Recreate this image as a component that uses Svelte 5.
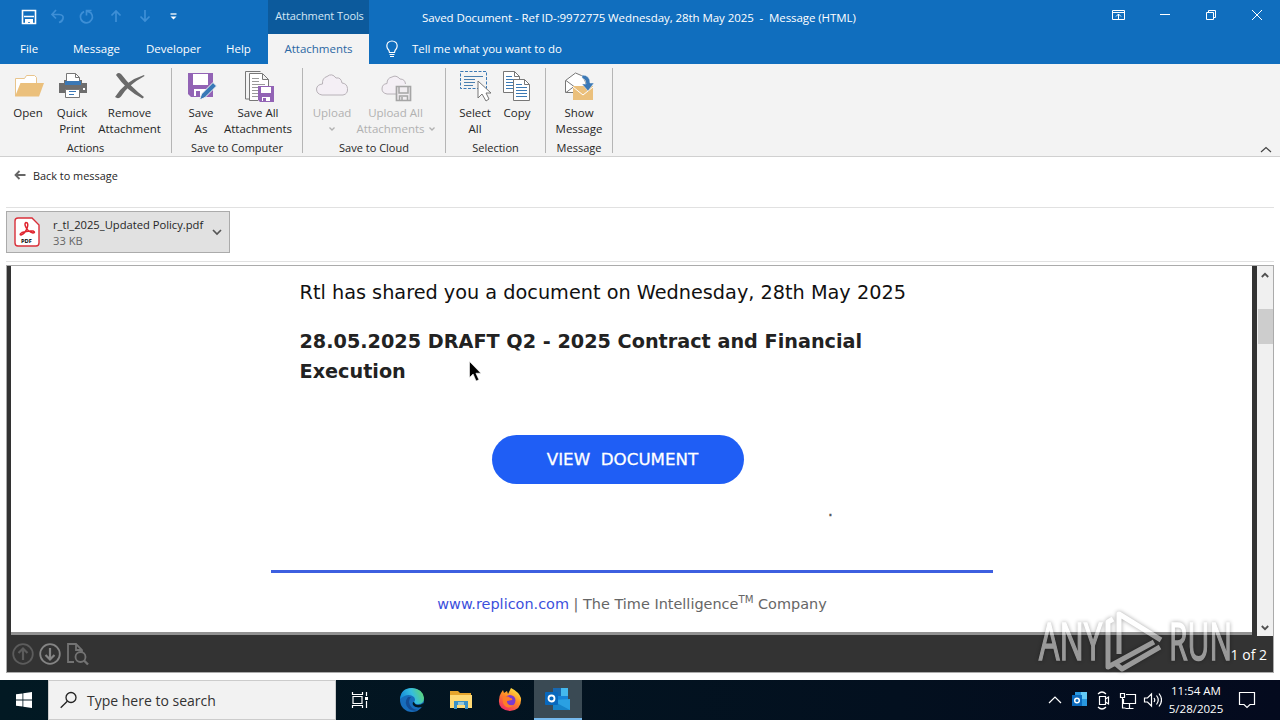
<script lang="ts">
	type Action = { icon: string; lines: string[]; width: number; arrow?: boolean };
	type Group = { name: string; width: number; pad: number; disabled?: boolean; actions: Action[] };

	const groups: Group[] = [
		{
			name: 'Actions',
			width: 172,
			pad: 6,
			actions: [
				{ icon: 'open', lines: ['Open'], width: 44 },
				{ icon: 'print', lines: ['Quick', 'Print'], width: 44 },
				{ icon: 'remove', lines: ['Remove', 'Attachment'], width: 71 }
			]
		},
		{
			name: 'Save to Computer',
			width: 131,
			pad: 8,
			actions: [
				{ icon: 'save', lines: ['Save', 'As'], width: 42 },
				{ icon: 'saveall', lines: ['Save All', 'Attachments'], width: 72 }
			]
		},
		{
			name: 'Save to Cloud',
			width: 143,
			pad: 9,
			disabled: true,
			actions: [
				{ icon: 'cloud', lines: ['Upload', ''], width: 40, arrow: true },
				{ icon: 'cloudall', lines: ['Upload All', 'Attachments'], width: 87, arrow: true }
			]
		},
		{
			name: 'Selection',
			width: 100,
			pad: 8,
			actions: [
				{ icon: 'select', lines: ['Select', 'All'], width: 42 },
				{ icon: 'copy', lines: ['Copy'], width: 42 }
			]
		},
		{
			name: 'Message',
			width: 67,
			pad: 4,
			actions: [{ icon: 'show', lines: ['Show', 'Message'], width: 58 }]
		}
	];
</script>

{#snippet chevron(color: string)}
	<svg width="6" height="4" viewBox="0 0 6 4"><path d="M.5 .5 3 3 5.5 .5" fill="none" stroke={color} stroke-width="1.300" /></svg>
{/snippet}

{#snippet ribbonIcon(name: string)}
	<svg width="34" height="34" viewBox="0 0 34 34" fill="none">
		{#if name === 'open'}
			<path d="M4.500 27V9.500h9l2-3h8l2 2v6" fill="#fff" stroke="#e8c48c" />
			<path d="M4 27.500 9.500 14H33l-5 13.500z" fill="#ebc07c" />
		{:else if name === 'print'}
			<path d="M4 14h5v-3h18v3h5v10H4z" fill="#6d6d6d" />
			<path d="M11.500 13V4.500h9l4 4V13" fill="#fff" stroke="#777" />
			<path d="M20.500 4.500v4h4" stroke="#777" />
			<path d="M10 12h16v4H10z" fill="#3b78b5" />
			<path d="M10.500 20.500h14v8h-14z" fill="#fff" stroke="#777" />
			<path d="M14 22.500h7M14 25.500h5" stroke="#3b78b5" />
			<path d="M28 20h2" stroke="#fff" stroke-width="2" />
		{:else if name === 'remove'}
			<path d="M3 6q2-3.500 5.500-.5Q18 18 31 28l-1.500 1.500Q14 22 3 6z" fill="#6a6a6a" />
			<path d="m31 6 .5 1Q15 16 8 27.500q-2.500 3-6 .5Q12 12 31 6z" fill="#6a6a6a" />
		{:else if name === 'save'}
			<path d="M4 4h25v24H7l-3-3z" fill="#9263b5" />
			<path d="M9 5h15v11H9z" fill="#fff" />
			<path d="M10 20h13v7H10z" fill="#fff" />
			<path d="M12 22h4v5h-4z" fill="#9263b5" />
			<path d="m15.500 31 2-6L29 13.500l3.500 3.500L21 28.500z" fill="#3779b7" stroke="#f3f3f3" />
		{:else if name === 'saveall'}
			<path d="M8 30H4.500V2.500h15" stroke="#777" />
			<path d="M17 31.500H8.500V4.500h13l6 6V18M21.500 5v5.500h6" fill="#fff" stroke="#777" />
			<path d="M11 9.500h7M11 12.500h7M11 15.500h13M11 18.500h6M11 21.500h6M11 24.500h6M11 27.500h6" stroke="#999" />
			<path d="M17 17h16v16H19l-2-2z" fill="#9263b5" />
			<path d="M20 18h10v6H20zM21 28h8v4h-8z" fill="#fff" />
			<path d="M22 29h3v3h-3z" fill="#9263b5" />
		{:else if name === 'cloud'}
			<path d="M7 26Q1.500 25 1.500 20q.5-4.500 6-5Q7 9 12 7.500q5-4 9 1.500 5-1 6 5 5 .5 5.500 5.500Q33 25 28 26z" fill="#f4eff5" stroke="#b8b2b8" />
		{:else if name === 'cloudall'}
			<path d="M17 25H8q-5-1-5-5 0-5 5-5.500Q8 9 13 8q4-2.500 8 2 5 0 5.500 5" fill="#f4eff5" stroke="#b8b2b8" />
			<path d="M17.500 17.500h14v14h-14z" fill="#f1edf1" stroke="#a5a5a5" stroke-width="1.700" />
			<path d="M20 18v6h9v-6M20.500 31v-4h8v4M23 28v3" stroke="#a5a5a5" stroke-width="1.500" />
		{:else if name === 'select'}
			<path d="M2.500 2.500h26v17h-26z" stroke="#3b79b4" stroke-dasharray="3 1.500" />
			<path d="M6 7.500h19M6 10.500h11M6 13.500h11M6 16.500h9" stroke="#4a7faf" />
			<path d="M20 12v17l4-4 4 7 3-2-3-6h5z" fill="#fff" stroke="#777" />
		{:else if name === 'copy'}
			<path d="M3.500 2.500h11l5 5v16h-16z" fill="#fff" stroke="#777" />
			<path d="M14.500 2.500v5h5" stroke="#777" />
			<path d="M6 7.500h6M6 10.500h9M6 13.500h9M6 16.500h7M6 19.500h7" stroke="#3b79b4" />
			<path d="M13.500 10.500h11l5 5v16h-16z" fill="#fff" stroke="#777" />
			<path d="M24.500 10.500v5h5" stroke="#777" />
			<path d="M16 15.500h6M16 18.500h11M16 21.500h11M16 24.500h11M16 27.500h11" stroke="#3b79b4" />
		{:else if name === 'show'}
			<path d="M3.500 23.500v-12l10-7.500 7 3 3 6v10.500z" fill="#fff" stroke="#777" />
			<path d="m4 11.500 8 6-8 6" stroke="#777" />
			<path d="M11 17h20v14H11z" fill="#ebc07c" />
			<path d="m11 18 10 8 10-8" stroke="#fff" />
			<path d="M20 6q8 0 8 8h4l-6 8-6-7h4q0-5-4-6z" fill="#3b78b5" stroke="#f3f3f3" stroke-width=".5" />
		{/if}
	</svg>
{/snippet}

<div class="desktop">
	<header>
		<div class="left">
			<div class="quick">
				<svg width="200" height="34" viewBox="0 0 200 34" fill="none">
					<path d="M22.500 10.500h13v13h-13z" stroke="#fff" stroke-width="1.600" />
					<path d="M24 16.500h10" stroke="#fff" stroke-width="1.500" />
					<path d="M25 19h8v5h-3v-2h-2v2h-3z" fill="#fff" />
					<g stroke="#3e8fd6" stroke-width="1.700">
						<path d="m56 10-4 4.500 4 4M52 14.500h7q5 .5 4 4-.5 3-4 4" />
						<path d="M84 11.500q-5 3-3 8 3 5 8.500 2.500 5-4 1.500-9l-4-2M86.500 15.500v-5h5" />
						<path d="M116 22V11M111.500 15.500 116 11l4.500 4.500" />
						<path d="M145 10v11M140.500 16.500 145 21l4.500-4.500" />
					</g>
					<path d="M170.500 14h6" stroke="#fff" stroke-width="1.300" />
					<path d="M170.500 16.500h6l-3 3z" fill="#fff" />
				</svg>
			</div>
			<nav class="tabs">
				<span class="file">File</span>
				<span class="msg">Message</span>
				<span class="dev">Developer</span>
				<span class="help">Help</span>
			</nav>
		</div>
		<div class="context">
			<div class="tools">Attachment Tools</div>
			<div class="active">Attachments</div>
		</div>
		<div class="right">
			<div class="titlebar">
				<span class="title">Saved Document - Ref ID-:9972775 Wednesday, 28th May 2025&nbsp; -&nbsp; Message (HTML)</span>
				<svg width="170" height="30" viewBox="0 0 170 30" fill="none" stroke="#fff">
					<path d="M2.500 10.500h12v9h-12zM3 12.500h11M8.500 19v-5M6 16.500 8.500 14l2.500 2.500" />
					<path d="M50 14.500h10M96.500 12.500h7v7h-7zM98.500 12v-1.500h7v7H104M142 10l10 10M152 10l-10 10" />
				</svg>
			</div>
			<div class="tell">
				<svg width="14" height="18" viewBox="0 0 14 18" fill="none" stroke="#fff" stroke-width="1.200">
					<path d="M4.500 12.500q0-2-2-4Q1 5 3 2.500 7-.5 11 2.500 13 5 11.500 8.500q-2 2-2 4zM4.500 14.500h5M5 16.500h4" />
				</svg>
				<span>Tell me what you want to do</span>
			</div>
		</div>
	</header>

	<section class="ribbon">
		{#each groups as group}
			<div class="group" style="width: {group.width}px">
				<div class="actions" class:disabled={group.disabled} style="padding-left: {group.pad}px">
					{#each group.actions as action}
						<div class="action" style="width: {action.width}px">
							{@render ribbonIcon(action.icon)}
							{#each action.lines as line, i}
								<span>
									{line}
									{#if action.arrow && i === 1}{@render chevron('#b1b1b1')}{/if}
								</span>
							{/each}
						</div>
					{/each}
				</div>
				<div class="group-name">{group.name}</div>
			</div>
		{/each}
		<svg class="collapse" width="12" height="7" viewBox="0 0 12 7"><path d="m1 6 5-4.500L11 6" fill="none" stroke="#444" stroke-width="1.200" /></svg>
	</section>

	<div class="back">
		<svg width="12" height="10" viewBox="0 0 12 10"><path d="M11.500 5H1.500M5.500 1 1.500 5l4 4" fill="none" stroke="#666" stroke-width="1.800" /></svg>
		<span>Back to message</span>
	</div>

	<div class="files">
		<div class="chip">
			<svg width="26" height="30" viewBox="0 0 26 30">
				<path d="M4 1h14l7 7v18q0 3-3 3H4q-3 0-3-3V4q0-3 3-3z" fill="#fff" stroke="#d9303a" stroke-width="1.400" />
				<path d="M12 5.500q3 0 1 6-2 5-6 6.500-2-.5 1-2.500 5-2 11-1.500 3 1.500 0 2-5-1.500-7-5.500-2-4 0-5z" fill="none" stroke="#e0242e" stroke-width="1.500" />
				<text x="7" y="25.500" textLength="11" lengthAdjust="spacingAndGlyphs">PDF</text>
			</svg>
			<div class="file-text">
				<span>r_tl_2025_Updated Policy.pdf</span>
				<span class="size">33 KB</span>
			</div>
			<svg width="10" height="7" viewBox="0 0 10 7"><path d="m1 1 4 4 4-4" fill="none" stroke="#555" stroke-width="1.700" /></svg>
		</div>
	</div>

	<main class="preview">
		<div class="view">
			<article>
				<p class="shared">Rtl has shared you a document on Wednesday, 28th May 2025</p>
				<h1>28.05.2025 DRAFT Q2 - 2025 Contract and Financial<br />Execution</h1>
				<div class="cta">VIEW&nbsp; DOCUMENT</div>
				<div class="dot">.</div>
				<footer>
					<span class="link">www.replicon.com</span> | The Time Intelligence<sup>TM</sup> Company
				</footer>
			</article>
			<div class="scrollbar">
				<svg width="8" height="6" viewBox="0 0 8 6"><path d="m.8 5 3.200-3.200L7.200 5" fill="none" stroke="#505050" stroke-width="1.800" /></svg>
				<div class="thumb"></div>
				<svg width="8" height="6" viewBox="0 0 8 6"><path d="m.8 1 3.200 3.200L7.200 1" fill="none" stroke="#505050" stroke-width="1.800" /></svg>
			</div>
		</div>
		<div class="pager">
			<svg width="84" height="26" viewBox="0 0 84 26" fill="none" stroke-width="1.800">
				<g stroke="#5c5c5c"><circle cx="16" cy="13" r="9.800" /><path d="M16 19V8M11.500 12 16 7.500l4.500 4.500" stroke-width="2.200" /></g>
				<g stroke="#858585"><circle cx="43" cy="13" r="9.800" /><path d="M43 7v11M38.500 14l4.500 4.500 4.500-4.500" stroke-width="2.200" /></g>
				<path d="M67 21h-6V3h8l6 6v2M69 3v6h6" stroke="#737373" />
				<circle cx="73.500" cy="16" r="5" stroke="#737373" /><path d="m77 19.500 4 4" stroke="#737373" stroke-width="2.400" />
			</svg>
			<span>1 of 2</span>
		</div>
	</main>

	<div class="taskbar">
		<div class="start">
			<svg width="16" height="16" viewBox="0 0 16 16" fill="#fff"><path d="M0 2.300 6.500 1.400v6.100H0zM7.300 1.300 16 0v7.500H7.300zM0 8.400h6.500v6.200L0 13.700zM7.300 8.400H16V16l-8.700-1.300z" /></svg>
		</div>
		<div class="search">
			<svg width="18" height="18" viewBox="0 0 18 18" fill="none" stroke="#222" stroke-width="1.300"><circle cx="11" cy="6.500" r="5" /><path d="m7.300 10.200-6.600 6.600" /></svg>
			<span>Type here to search</span>
		</div>
		<div class="app view-tasks">
			<svg width="18" height="16" viewBox="0 0 18 16" fill="none" stroke="#fff" stroke-width="1.200"><path d="M2 4.500h9v7H2zM1.500 0v2.500h10V0M1.500 16v-2.500h10V16M15.500 0v4M15.500 9v7" /><path d="M14 5h3v3h-3z" fill="#fff" stroke="none" /></svg>
		</div>
		<div class="app">
			<svg width="24" height="24" viewBox="0 0 24 24">
				<defs>
					<linearGradient id="edge" x1="0" x2="1" y1=".5" y2=".2"><stop offset="0" stop-color="#1489d7" /><stop offset=".5" stop-color="#35bde0" /><stop offset="1" stop-color="#62d765" /></linearGradient>
				</defs>
				<circle cx="12" cy="12" r="12" fill="#176dbc" />
				<path d="M0 11Q1 0 12 0q11 1 12 10 0 6-6 6-4 0-4-2 2-2 0-5Q8 4 0 11z" fill="url(#edge)" />
				<path d="M14 14q1 3 4 3t5.500-2l.5 1.500-2 2.500q-7 1.500-9-2-1-3 1-3z" fill="#021923" />
				<path d="M8 9q-5 6 1 12 4 3 9 1-8-1-9-8 0-3 2-5z" fill="#134c94" />
			</svg>
		</div>
		<div class="app">
			<svg width="22" height="20" viewBox="0 0 22 20">
				<path d="M0 1h8l2 2h11v15H0z" fill="#e6a52c" /><path d="M0 5h22v13H0z" fill="#ffda75" />
				<path d="M4 19v-8h14v8h-3v-4H7v4z" fill="#3a91c8" /><path d="M8 12h6v3H8z" fill="#94c7d9" />
			</svg>
		</div>
		<div class="app">
			<svg width="24" height="24" viewBox="0 0 24 24">
				<defs><linearGradient id="fox" x1=".8" x2=".2" y1="0" y2="1"><stop offset="0" stop-color="#ffec45" /><stop offset=".45" stop-color="#ff8b25" /><stop offset="1" stop-color="#ef236d" /></linearGradient></defs>
				<path d="M3 5 5 2l1 3 3-2 1 3 3-6q8 4 10 10 1 12-11 13Q0 22 1 12q0-4 2-7z" fill="url(#fox)" />
				<circle cx="12" cy="12.500" r="5.500" fill="#7b3acf" /><path d="M5 9q5-2 7 1 3 0 2 2l-5 1q0 5 7 4-6 5-10 0-2-3-1-8z" fill="#ff7c27" />
			</svg>
		</div>
		<div class="app current">
			<svg width="26" height="22" viewBox="0 0 26 22">
				<path d="M8 0h15v16H8z" fill="#1684d8" /><path d="M16 0h7v8h-7z" fill="#44b8ed" /><path d="M8 0h8v8H8z" fill="#1768b1" />
				<path d="M8 12 25 11v11H8z" fill="#2aa0e2" /><path d="m8 13 17 9H8z" fill="#1684ca" />
				<rect y="4" width="13" height="13" rx="1" fill="#0868bd" /><circle cx="6.500" cy="10.500" r="3" fill="none" stroke="#fff" stroke-width="1.800" />
			</svg>
		</div>
		<div class="tray">
			<svg width="114" height="24" viewBox="0 0 114 24" fill="none" stroke="#fff" stroke-width="1.200">
				<path d="m1 15 6-6 6 6" />
				<path d="M27 4h12v14H27z" fill="#2998df" stroke="none" /><path d="M33 4h6v7h-6z" fill="#62c9f5" stroke="none" />
				<path d="M24 7h10v11H24z" fill="#0b6abd" stroke="none" /><circle cx="29" cy="12.500" r="2.300" stroke-width="1.500" />
				<path d="M51.500 8.500h6v8h-6zM57.500 11l3-2v7l-3-2M50 6q4-4 8 0M50 19q4 4 8 0" />
				<path d="M78 6.500h9.500v9H75.500V11M81.500 16v4M77.500 20.500h8M72.500 5.500h4v4h-4zM74.500 10v10h3" />
				<path d="M96.500 10h3l4-4v12l-4-4h-3zM106 10q1.500 2 0 4M108.500 7.500q3.500 4.500 0 9M111 5.500q5 6.500 0 13" />
			</svg>
			<div class="clock"><span>11:54 AM</span><span>5/28/2025</span></div>
			<svg width="18" height="18" viewBox="0 0 18 18" fill="none" stroke="#fff" stroke-width="1.200"><path d="M1.500 1.500h15v12H12l-3 3-3-3H1.500z" /></svg>
		</div>
	</div>

	<svg class="watermark" width="210" height="76" viewBox="0 0 210 76">
		<text x="3" y="56" textLength="63" lengthAdjust="spacingAndGlyphs">ANY</text>
		<path d="M83 50V10l42 26M77 15l-5 3v45l46-25M124 43 86 65l-6-5" fill="none" stroke="#fff" stroke-width="5" stroke-linejoin="round" />
		<text x="133" y="56" textLength="63" lengthAdjust="spacingAndGlyphs">RUN</text>
	</svg>
	<svg class="pointer" width="13" height="21" viewBox="0 0 13 21"><path d="M.5.500v16l3.600-3.500 3 7 2.800-1.300-3-6.500h5z" fill="#000" stroke="#fff" stroke-width=".6" /></svg>
</div>

<style>
	:global(body) {
		margin: 0;
		overflow: hidden;
	}

	.desktop {
		position: relative;
		width: 1280px;
		height: 720px;
		background: #fff;
		font-family: 'Open Sans', 'Noto Sans', sans-serif;
		font-size: 11.5px;
		color: #262626;
		white-space: nowrap;
	}

	svg {
		display: block;
		flex: none;
	}

	header {
		display: flex;
		height: 64px;
		background: #106ebe;
		color: #fff;
	}

	.left {
		width: 268px;
	}

	.quick {
		height: 34px;
	}

	.tabs {
		display: flex;
		height: 30px;
		line-height: 30px;
	}

	.file {
		width: 53px;
		margin-left: 20px;
	}

	.msg {
		width: 73px;
	}

	.dev {
		width: 80px;
	}

	.context {
		width: 101px;
		text-align: center;
	}

	.tools {
		height: 34px;
		line-height: 32px;
		background: #0c5a9c;
		color: #d3e6f5;
		font-size: 11px;
		letter-spacing: -0.1px;
		text-indent: 2px;
	}

	.active {
		height: 30px;
		line-height: 30px;
		background: #f3f3f3;
		color: #2b67a3;
	}

	.right {
		flex: 1;
	}

	.titlebar {
		display: flex;
		justify-content: space-between;
		height: 34px;
		margin-left: 53px;
		line-height: 35px;
	}

	.title {
		letter-spacing: -0.07px;
	}

	.tell {
		display: flex;
		align-items: center;
		gap: 13px;
		height: 29px;
		padding-left: 16px;
		letter-spacing: -0.05px;
	}

	.ribbon {
		position: relative;
		display: flex;
		box-sizing: border-box;
		height: 93px;
		background: #f3f3f3;
		border-bottom: 1px solid #d0d0d0;
	}

	.group {
		box-sizing: border-box;
		height: 85px;
		margin-top: 4px;
		border-right: 1px solid #b5b5b5;
	}

	.actions {
		display: flex;
		box-sizing: border-box;
		height: 72px;
		padding-top: 1px;
	}

	.disabled {
		color: #b1b1b1;
	}

	.action {
		display: flex;
		flex-direction: column;
		align-items: center;
		line-height: 16px;
	}

	.action svg:first-child {
		margin-bottom: 2px;
	}

	.action span {
		display: flex;
		align-items: center;
		justify-content: center;
		gap: 4px;
		height: 16px;
	}

	.action span svg:first-child {
		margin: 0;
	}

	.group-name {
		line-height: 16px;
		text-align: center;
		font-size: 11px;
	}

	.collapse {
		position: absolute;
		right: 8px;
		bottom: 3px;
	}

	.back {
		display: flex;
		gap: 7px;
		align-items: center;
		height: 36px;
		margin: 0 6px;
		padding: 0 0 14px 8px;
		border-bottom: 1px solid #e1e1e1;
		font-size: 10.9px;
	}

	.files {
		height: 50px;
		margin: 0 6px;
		padding-top: 3px;
		border-bottom: 1px solid #e1e1e1;
	}

	.chip {
		display: flex;
		align-items: center;
		box-sizing: border-box;
		width: 224px;
		height: 42px;
		padding: 0 7px;
		background: #e1e1e1;
		border: 1px solid #ababab;
	}

	.chip text {
		font-size: 6px;
		font-weight: 700;
	}

	.file-text {
		display: flex;
		flex-direction: column;
		width: 159px;
		margin-left: 13px;
		padding-top: 1px;
		line-height: 16px;
		font-size: 11.2px;
	}

	.size {
		color: #666;
	}

	.preview {
		box-sizing: border-box;
		width: 1268px;
		height: 408px;
		margin: 3px 6px 0;
		background: #333;
		border: 1px solid #ababab;
	}

	.view {
		display: flex;
		justify-content: space-between;
		height: 370px;
		padding-left: 4px;
	}

	article {
		box-sizing: border-box;
		width: 1241px;
		height: 369px;
		padding: 14px 259px 0 260px;
		background: #fff;
		border-bottom: 3px solid #929292;
		font-family: 'DejaVu Sans', sans-serif;
	}

	.shared {
		margin: 0 0 21px 28.5px;
		font-size: 19.27px;
		line-height: 26px;
		color: #111;
	}

	h1 {
		margin: 0 0 48px 28.5px;
		font-size: 19.23px;
		line-height: 30px;
		color: #222;
	}

	.cta {
		width: 252px;
		height: 49px;
		margin-left: 221px;
		border-radius: 25px;
		background: #1f5ef5;
		color: #fff;
		font-size: 16.7px;
		line-height: 49px;
		text-align: center;
		text-indent: 9px;
		-webkit-text-stroke: 0.3px #fff;
	}

	.dot {
		height: 86px;
		padding-left: 557px;
		font-size: 15px;
		line-height: 54px;
		color: #555;
		-webkit-text-stroke: 0.4px #555;
	}

	footer {
		border-top: 3px solid #3d5fe0;
		padding-top: 18px;
		font-size: 14.45px;
		line-height: 26px;
		text-align: center;
		color: #666;
	}

	.link {
		color: #3b50dc;
	}

	sup {
		font-size: 10.2px;
		line-height: 0;
	}

	.scrollbar {
		display: flex;
		flex-direction: column;
		align-items: center;
		box-sizing: border-box;
		width: 16px;
		height: 370px;
		padding: 6px 0 5px;
		background: #f0f0f0;
	}

	.thumb {
		width: 15px;
		height: 35px;
		margin: 31px 0 auto;
		background: #cdcdcd;
	}

	.pager {
		display: flex;
		align-items: center;
		justify-content: space-between;
		height: 36px;
		padding-right: 6px;
		color: #fff;
		font-size: 14px;
	}

	.taskbar {
		display: flex;
		height: 40px;
		margin-top: 7px;
		background: linear-gradient(90deg, #021923, #03101f 70%, #040a1e);
	}

	.start,
	.app {
		display: flex;
		align-items: center;
		justify-content: center;
		width: 48px;
	}

	.app {
		width: 49px;
	}

	.view-tasks {
		width: 48px;
		margin-right: 3px;
	}

	.current {
		box-sizing: border-box;
		width: 48px;
		background: #3a4a54;
		border-bottom: 2px solid #76b9ed;
	}

	.search {
		display: flex;
		align-items: center;
		gap: 9px;
		box-sizing: border-box;
		width: 288px;
		padding-left: 11px;
		background: #f2f2f2;
		border: 1px solid #ccc;
		color: #333;
		font-size: 14px;
	}

	.tray {
		display: flex;
		align-items: center;
		margin-left: auto;
		padding-right: 24px;
		color: #fff;
	}

	.tray svg:first-child {
		margin-right: -1px;
	}

	.clock {
		display: flex;
		flex-direction: column;
		align-items: center;
		width: 70px;
		margin-right: 7px;
		line-height: 18px;
	}

	.watermark {
		position: absolute;
		left: 1036px;
		top: 604px;
		opacity: 0.5;
		filter: drop-shadow(0 0 2px rgba(0, 0, 0, 0.7));
	}

	.watermark text {
		font-size: 52px;
		fill: #fff;
		stroke: #fff;
		stroke-width: 1.6px;
	}

	.pointer {
		position: absolute;
		left: 469px;
		top: 361px;
	}
</style>
